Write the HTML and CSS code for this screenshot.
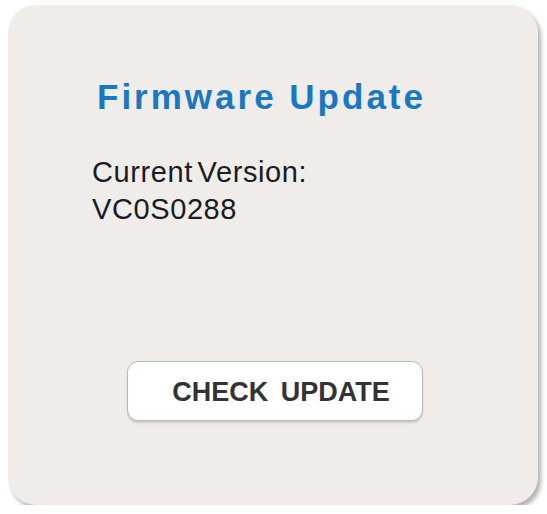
FILE: index.html
```html
<!DOCTYPE html>
<html lang="en">

<head>
  <meta charset="UTF-8" />
  <meta name="viewport" content="width=device-width, initial-scale=1.0" />
  <title>Firmware Update</title>
  <link rel="stylesheet" href="styles.css">
</head>

<body>
  <div class="card">
    <h1 class="title">Firmware Update</h1>

    <div class="version">
      <p>Current Version:</p>
      <p>VC0S0288</p>
    </div>

    <button class="check-btn">CHECK UPDATE</button>
  </div>
</body>

</html>
```

FILE: styles.css
```css
body {
  font-family: 'Liberation Sans', Arial, sans-serif;
  background-color: #ffffff;
  margin: 0;
  padding: 5px 0 0 8px;
}

.card {
  width: 530px;
  height: 500px;
  box-sizing: border-box;
  background-color: #efecea;
  border-radius: 28px;
  box-shadow: 3px 4px 4px rgba(0, 0, 0, 0.3);
  padding: 73px 0 0 84px;
  display: flex;
  flex-direction: column;
  align-items: flex-start;
}

.title {
  margin: 0 0 0 5px;
  font-size: 35px;
  line-height: 38px;
  font-weight: bold;
  letter-spacing: 3px;
  color: #1a78c2;
}

.version {
  margin-top: 38px;
}

.version p {
  margin: 0;
  font-size: 29px;
  line-height: 37px;
  color: #1b1b22;
  letter-spacing: 0.6px;
  word-spacing: -4px;
}

.check-btn {
  margin: 133px 0 0 35px;
  width: 296px;
  height: 60px;
  background-color: #ffffff;
  border: 1.5px solid #b9b9b9;
  border-radius: 11px;
  box-shadow: 0 2px 2px rgba(0, 0, 0, 0.15);
  font-family: 'Liberation Sans', Arial, sans-serif;
  font-size: 27px;
  font-weight: bold;
  color: #333333;
  word-spacing: 5px;
  padding: 2px 0 0 12px;
  cursor: pointer;
}
```
